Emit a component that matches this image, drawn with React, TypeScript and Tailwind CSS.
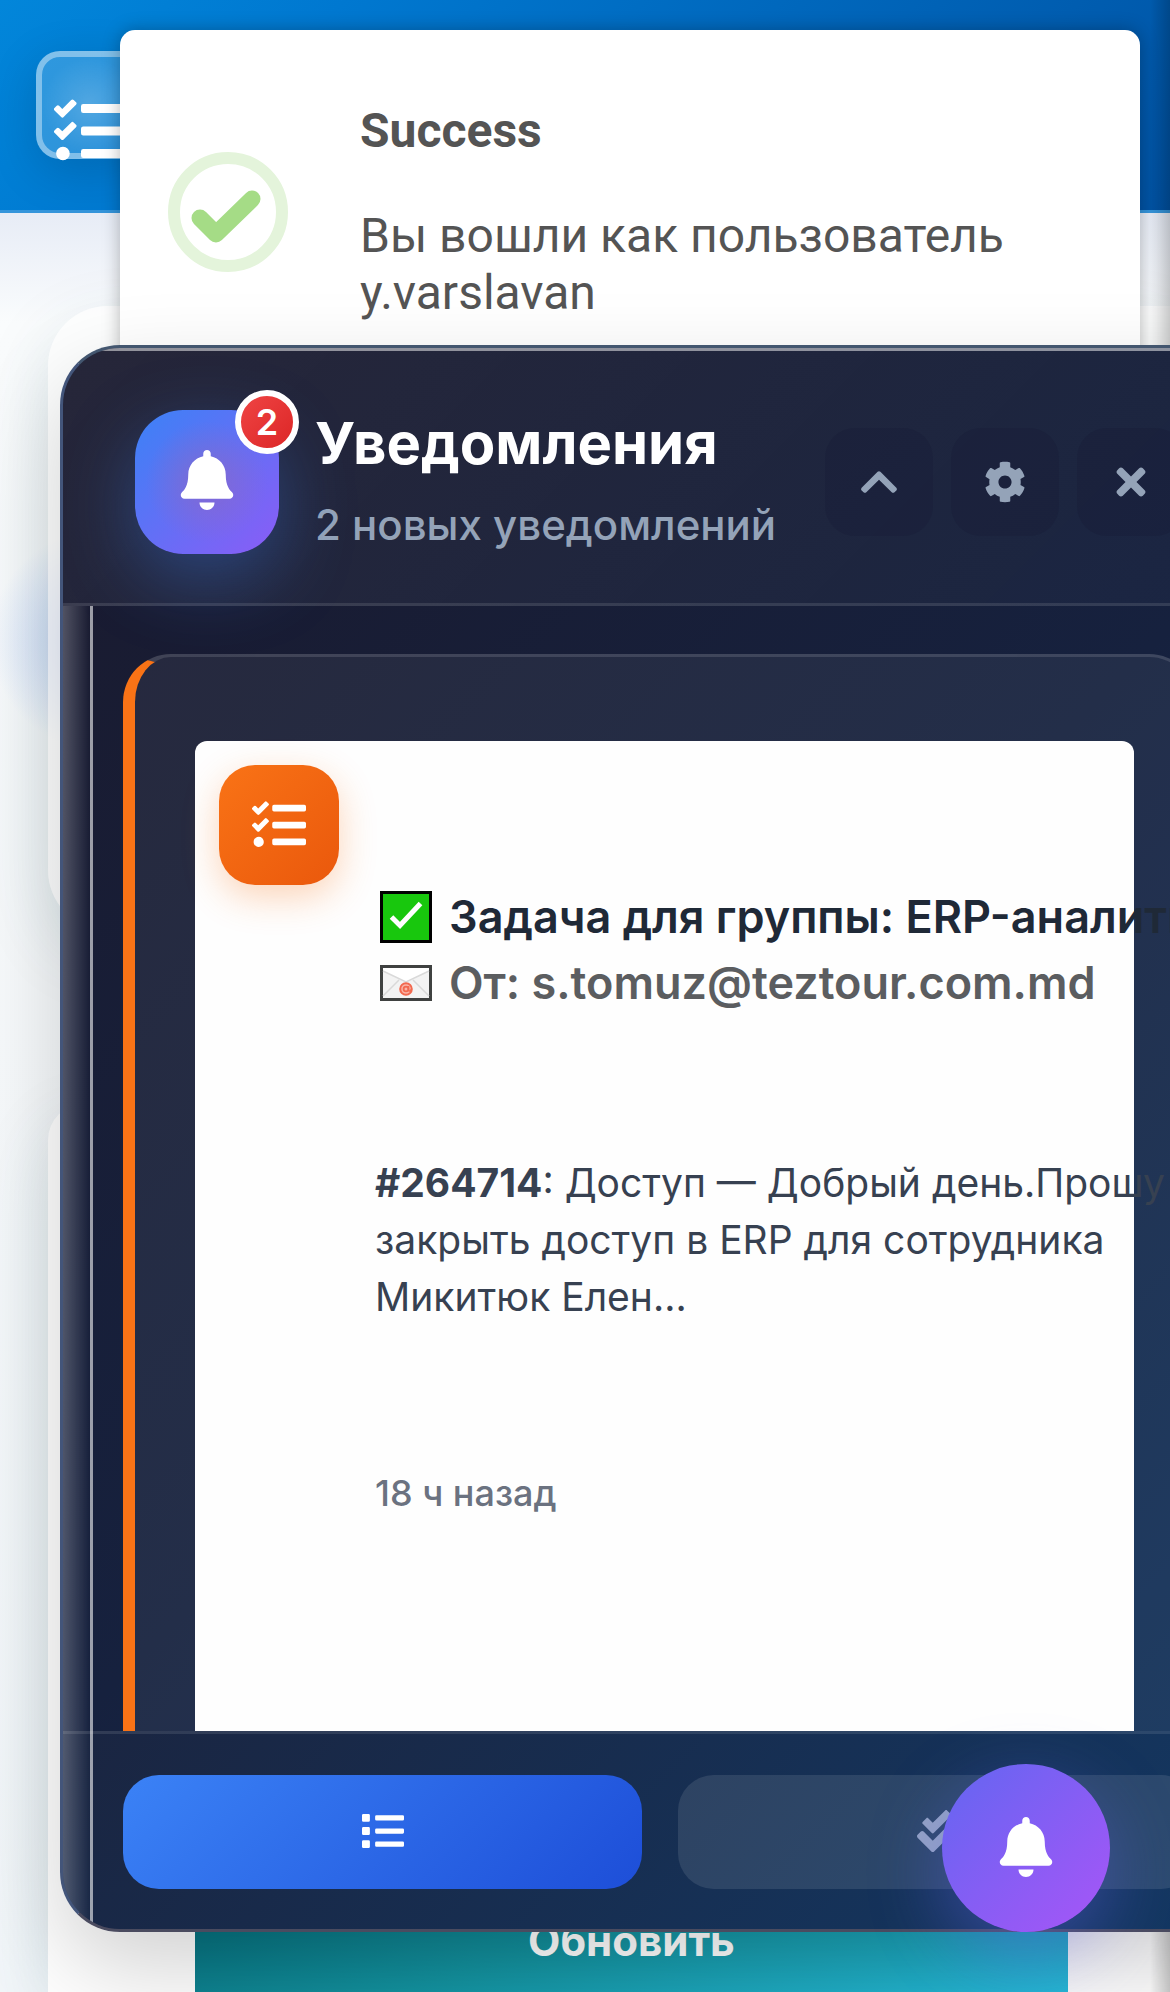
import type { ReactNode } from "react";
import { FaBell, FaCheckDouble, FaChevronUp, FaCog, FaList, FaTasks, FaTimes } from "react-icons/fa";

function PageHeader() {
  return (
    <header className="flex h-[213px] items-start border-b-3 border-[#3595db] bg-[linear-gradient(135deg,#0286da_0%,#0078d0_25%,#0052a3_100%)] px-9 pt-[51px]">
      <div className="h-[108px] w-[108px] rounded-3xl border-6 border-white/40 bg-[radial-gradient(circle_at_50%_50%,rgba(255,255,255,0.32),rgba(255,255,255,0.18)_70%)] pt-[38px] pl-3 text-white shadow-[0_12px_48px_rgba(0,0,0,0.15)]">
        <FaTasks size={72} aria-hidden />
      </div>
    </header>
  );
}

function PageContent() {
  return (
    <main className="flex flex-1 flex-col gap-[174px] bg-[#f8fafc] bg-[radial-gradient(circle_at_100px_427px,rgba(150,185,250,0.6),rgba(150,185,250,0)_110px),linear-gradient(180deg,#e7ecf6,#fafcfd_110px,#f3f7fa)] pt-[93px] pl-12">
      <section className="h-[624px] shrink-0 rounded-l-[60px] bg-white/65 shadow-[0_24px_72px_rgba(0,80,100,0.12)]" />
      <section className="flex flex-1 flex-col justify-end rounded-tl-[36px] bg-white pr-[102px] pl-[147px] shadow-[0_24px_72px_rgba(0,80,100,0.12)]">
        <button
          type="button"
          className="h-[126px] shrink-0 rounded-t-3xl bg-[linear-gradient(165deg,#00606e_0%,#13929f_50%,#26bcda_100%)] pt-6 text-[42px] leading-[60px] font-bold text-white"
        >
          Обновить
        </button>
      </section>
    </main>
  );
}

function Toast() {
  return (
    <div
      role="status"
      className="absolute top-[30px] right-[30px] left-[120px] flex items-center rounded-[15px] bg-white px-12 py-18 font-[Roboto,sans-serif] text-[48px] leading-[57px] text-[#545454] shadow-[0_0_18px_rgba(0,0,0,0.28)]"
    >
      <svg viewBox="0 0 120 120" className="mr-[72px] h-[120px] w-[120px] shrink-0" fill="none" aria-hidden>
        <circle cx="60" cy="60" r="54" stroke="#e4f4db" strokeWidth="12" />
        <path d="M32 66 48 82 84 47" stroke="#a5dc86" strokeWidth="17" strokeLinecap="round" strokeLinejoin="round" />
      </svg>
      <div className="flex flex-col gap-12">
        <h2 className="font-bold">Success</h2>
        <p>Вы вошли как пользователь y.varslavan</p>
      </div>
    </div>
  );
}

function ActionButton({ label, children }: { label: string; children: ReactNode }) {
  return (
    <button
      type="button"
      aria-label={label}
      className="flex h-[108px] w-[108px] items-center justify-center rounded-[30px] bg-[#181c34]/30 text-[#94a3b8]"
    >
      {children}
    </button>
  );
}

function CheckMarkIcon() {
  return (
    <svg viewBox="0 0 52 52" className="h-[52px] w-[52px] shrink-0" aria-hidden>
      <rect x="1.5" y="1.5" width="49" height="49" fill="#18c70d" stroke="#000" strokeWidth="3" />
      <path d="M11.500 26 20 34.500 40.500 12.500" fill="none" stroke="#fff" strokeWidth="5" />
    </svg>
  );
}

function EnvelopeIcon() {
  return (
    <svg viewBox="0 0 52 36" className="h-9 w-[52px] shrink-0" aria-hidden>
      <rect x="1.5" y="1.5" width="49" height="33" fill="#f3f3f3" stroke="#3f4140" strokeWidth="3" />
      <path d="M3 3H49V6L26 17 3 6Z" fill="#fff" />
      <path d="M3 6 26 17 49 6M3 31 19 15M49 31 33 15" fill="none" stroke="#d9d9d9" strokeWidth="1.5" />
      <circle cx="26" cy="24" r="5.8" fill="#f9b5a8" stroke="#f2694f" strokeWidth="2" />
      <circle cx="26" cy="24" r="2.4" fill="none" stroke="#f2694f" strokeWidth="1.8" />
      <path d="M28.500 21v4.500q1.500 1.500 3-1" fill="none" stroke="#f2694f" strokeWidth="1.6" />
    </svg>
  );
}

function NotificationCard() {
  return (
    <article className="flex-1 rounded-t-[48px] border-t-3 border-r-3 border-l-12 border-t-white/12 border-r-white/12 border-l-[#f97316] bg-white/6 px-[60px] pt-[84px]">
      <div className="flex h-full items-start gap-9 rounded-t-xl bg-[#fefefe] pl-6">
        <div className="mt-6 flex h-[120px] w-[120px] shrink-0 items-center justify-center rounded-[36px] bg-[linear-gradient(135deg,#f97316,#ea580c)] text-white shadow-[0_12px_36px_rgba(249,115,22,0.3)]">
          <FaTasks size={54} aria-hidden />
        </div>
        <div className="w-[798px] shrink-0 pt-[143px]">
          <div className="text-[45px] leading-[66px] font-semibold whitespace-nowrap">
            <h3 className="flex items-center gap-[17px] pl-[5px] text-[#1f2937]">
              <CheckMarkIcon />
              Задача для группы: ERP-аналитики
            </h3>
            <p className="flex items-center gap-[17px] pl-[5px] text-[#5b5d60]">
              <EnvelopeIcon />
              От: s.tomuz@teztour.com.md
            </p>
          </div>
          <p className="mt-[138px] text-[39px] leading-[57px] text-[#374151]">
            <strong className="font-bold">#264714</strong>: Доступ — Добрый день.Прошу закрыть доступ в ERP для
            сотрудника Микитюк Елен...
          </p>
          <time className="mt-[141px] block text-[36px] leading-[54px] font-medium text-[#6b7280]">18 ч назад</time>
        </div>
      </div>
    </article>
  );
}

function NotificationPanel() {
  return (
    <aside
      aria-label="Уведомления"
      className="absolute top-[345px] right-[-90px] bottom-[60px] left-[60px] flex flex-col overflow-hidden rounded-[60px] border-3 border-t-[#43566f] border-r-[#43566f] border-b-[#4a4b5f] border-l-[#43557a] bg-[linear-gradient(135deg,#1a1a2e_0%,#16213e_50%,#0f3460_100%)]"
    >
      <header className="relative flex shrink-0 items-center border-b-3 border-white/10 bg-[linear-gradient(135deg,rgba(255,255,255,0.05),rgba(255,255,255,0.02))] px-[72px] pt-[59px] pb-[47px] shadow-[inset_0_3px_0_rgba(255,255,255,0.5)]">
        <div className="relative flex h-36 w-36 shrink-0 items-center justify-center rounded-[48px] bg-[radial-gradient(circle_at_50%_50%,rgba(160,100,170,0.5),rgba(160,100,170,0)_60%),linear-gradient(135deg,#3b82f6,#8b5cf6)] pb-[3px] text-white shadow-[0_24px_72px_rgba(59,130,246,0.35)]">
          <FaBell size={60} aria-hidden />
          <span className="absolute -top-5 -right-5 flex h-16 w-16 items-center justify-center rounded-full border-6 border-white bg-[linear-gradient(135deg,#ef4444,#dc2626)] text-[36px] leading-none font-semibold">
            2
          </span>
        </div>
        <div className="ml-9 flex flex-1 flex-col gap-[14px] whitespace-nowrap">
          <h1 className="text-[58px] leading-[72px] font-bold text-white">Уведомления</h1>
          <p className="text-[42px] leading-[63px] font-medium text-[#94a3b8]">2 новых уведомлений</p>
        </div>
        <div className="flex gap-[18px]">
          <ActionButton label="Свернуть">
            <FaChevronUp size={42} aria-hidden />
          </ActionButton>
          <ActionButton label="Настройки">
            <FaCog size={42} aria-hidden />
          </ActionButton>
          <ActionButton label="Закрыть">
            <FaTimes size={42} aria-hidden />
          </ActionButton>
        </div>
      </header>
      <div className="relative flex flex-1 flex-col">
        <div className="flex flex-1 flex-col px-[60px] pt-12">
          <NotificationCard />
        </div>
        <footer className="grid h-[198px] shrink-0 grid-cols-2 gap-9 border-t-3 border-white/10 bg-white/2 px-[60px] pt-[41px]">
          <button
            type="button"
            aria-label="Все уведомления"
            className="flex h-[114px] items-center justify-center rounded-[36px] bg-[linear-gradient(135deg,#3b82f6,#1d4ed8)] pb-0.5 text-white"
          >
            <FaList size={42} aria-hidden />
          </button>
          <button
            type="button"
            aria-label="Прочитать все"
            className="flex h-[114px] items-center justify-center rounded-[36px] bg-white/10 pb-0.5 text-[#94a3c4]"
          >
            <FaCheckDouble size={42} aria-hidden />
          </button>
        </footer>
        <div className="pointer-events-none absolute inset-y-0 left-0 w-[30px] border-r-3 border-white/45 bg-[linear-gradient(90deg,rgba(255,255,255,0.24),rgba(255,255,255,0))]" />
      </div>
    </aside>
  );
}

export default function App() {
  return (
    <div className="relative flex h-screen min-h-[1400px] flex-col overflow-hidden font-[Inter,'Noto_Sans',sans-serif]">
      <PageHeader />
      <PageContent />
      <div className="pointer-events-none absolute inset-y-0 right-0 w-5 bg-linear-to-r from-black/0 to-black/20" />
      <Toast />
      <div className="absolute top-[345px] right-[-90px] bottom-[60px] left-[60px] rounded-[60px] shadow-[0_36px_90px_rgba(0,0,0,0.18)]" />
      <NotificationPanel />
      <button
        type="button"
        aria-label="Открыть уведомления"
        className="absolute right-[60px] bottom-[60px] flex h-[168px] w-[168px] items-center justify-center rounded-full bg-[linear-gradient(135deg,#6366f1,#a855f7)] pb-[3px] text-white shadow-[0_24px_72px_rgba(99,102,241,0.4)]"
      >
        <FaBell size={60} aria-hidden />
      </button>
    </div>
  );
}
